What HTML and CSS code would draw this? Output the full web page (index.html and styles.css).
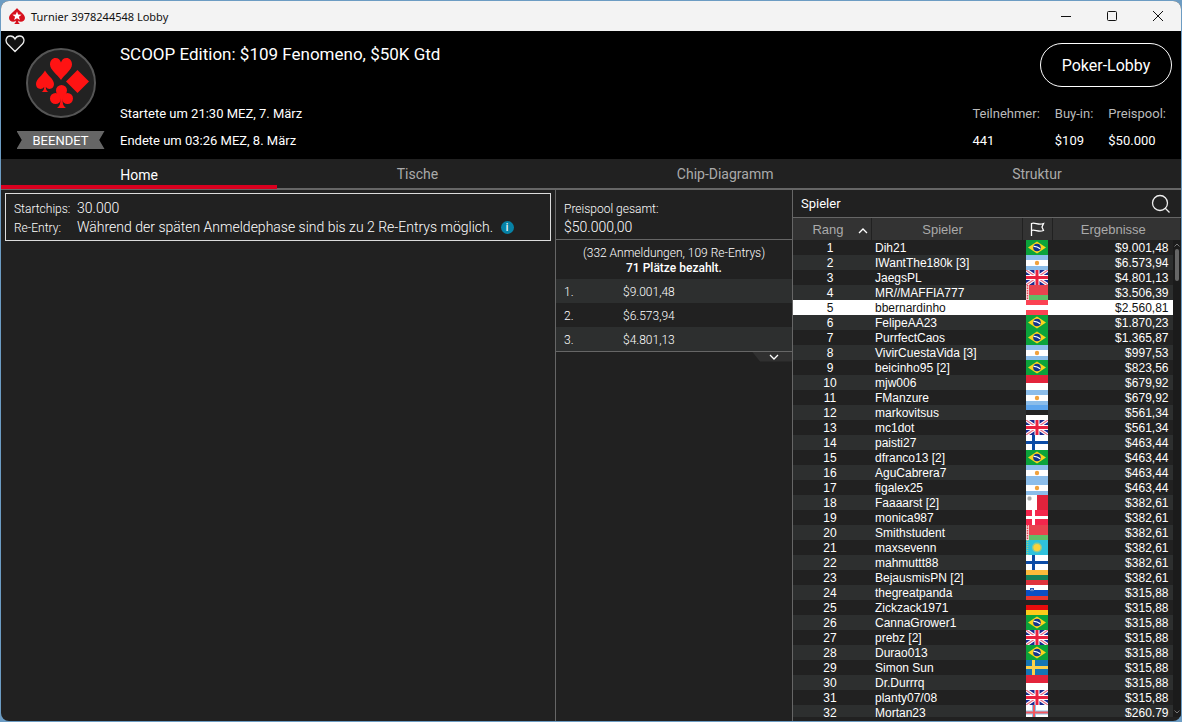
FILE: index.html
```html
<!DOCTYPE html>
<html lang="de">
<head>
    <meta charset="UTF-8">
    <meta name="viewport" content="width=device-width, initial-scale=1.0">
    <title>Turnier 3978244548 Lobby</title>
    <link rel="stylesheet" href="styles.css">
</head>
<body>
    <svg class="sprite" aria-hidden="true">
        <symbol id="flag-br" viewBox="0 0 22 15">
            <rect width="22" height="15" fill="#0ba33b"/>
            <path d="M11 1.5L20 7.5L11 13.5L2 7.5Z" fill="#fbd41d"/>
            <circle cx="11" cy="7.5" r="3.8" fill="#12348c"/>
            <path d="M7.6 6.4Q11 6.2 14.2 8.8" stroke="#fff" stroke-width="1.2" fill="none"/>
        </symbol>
        <symbol id="flag-ar" viewBox="0 0 22 15">
            <rect width="22" height="15" fill="#fff"/>
            <rect width="22" height="5" fill="#8bbdea"/>
            <rect y="11" width="22" height="4" fill="#8bbdea"/>
            <circle cx="11" cy="8" r="2.2" fill="#f0a23c"/>
        </symbol>
        <symbol id="flag-gb" viewBox="0 0 22 15">
            <rect width="22" height="15" fill="#1b2a91"/>
            <path d="M0 0L22 15M22 0L0 15" stroke="#fff" stroke-width="3.4"/>
            <path d="M0 0L22 15M22 0L0 15" stroke="#ec6f86" stroke-width="1.2"/>
            <path d="M11 0V15M0 7.5H22" stroke="#fff" stroke-width="5"/>
            <path d="M11 0V15M0 7.5H22" stroke="#e8213f" stroke-width="3"/>
        </symbol>
        <symbol id="flag-by" viewBox="0 0 22 15">
            <rect width="22" height="10" fill="#e8424f"/>
            <rect y="10" width="22" height="5" fill="#5fbe67"/>
            <rect width="3" height="15" fill="#f4d9da"/>
            <path d="M1.5 0V15" stroke="#e8424f" stroke-width="1.4" stroke-dasharray="1.5 1"/>
        </symbol>
        <symbol id="flag-at" viewBox="0 0 22 15">
            <rect width="22" height="15" fill="#fb4253"/>
            <rect y="5" width="22" height="5" fill="#fff"/>
        </symbol>
        <symbol id="flag-id" viewBox="0 0 22 15">
            <rect width="22" height="15" fill="#fff"/>
            <rect width="22" height="8" fill="#e3243b"/>
        </symbol>
        <symbol id="flag-ee" viewBox="0 0 22 15">
            <rect width="22" height="15" fill="#fff"/>
            <rect width="22" height="5" fill="#5ea6ee"/>
            <rect y="5" width="22" height="5" fill="#222"/>
        </symbol>
        <symbol id="flag-fi" viewBox="0 0 22 15">
            <rect width="22" height="15" fill="#fff"/>
            <path d="M7.5 0V15M0 7.5H22" stroke="#0b4ba6" stroke-width="3"/>
        </symbol>
        <symbol id="flag-mt" viewBox="0 0 22 15">
            <rect width="22" height="15" fill="#fff"/>
            <rect x="11" width="11" height="15" fill="#e0233c"/>
            <path d="M1.5 3.5H5.5M3.5 1.5V5.5" stroke="#aaa" stroke-width="2.6"/>
        </symbol>
        <symbol id="flag-dk" viewBox="0 0 22 15">
            <rect width="22" height="15" fill="#f4264c"/>
            <path d="M7.5 0V15M0 7.5H22" stroke="#fff" stroke-width="3"/>
        </symbol>
        <symbol id="flag-kz" viewBox="0 0 22 15">
            <rect width="22" height="15" fill="#2fc2dc"/>
            <circle cx="11" cy="7.5" r="5" fill="#8fc990"/>
            <circle cx="11" cy="7.5" r="3.6" fill="#fcd23c"/>
            <path d="M1.5 0V15" stroke="#a9c878" stroke-width="1.5" stroke-dasharray="1 1"/>
        </symbol>
        <symbol id="flag-lt" viewBox="0 0 22 15">
            <rect width="22" height="5" fill="#fdbb3b"/>
            <rect y="5" width="22" height="5" fill="#16815a"/>
            <rect y="10" width="22" height="5" fill="#df333c"/>
        </symbol>
        <symbol id="flag-si" viewBox="0 0 22 15">
            <rect width="22" height="5" fill="#fff"/>
            <rect y="5" width="22" height="6" fill="#0a4fc4"/>
            <rect y="11" width="22" height="4" fill="#e8362f"/>
            <path d="M4 3H8V5.5L6 7.5L4 5.5Z" fill="#2458b4"/>
            <path d="M5 5.5L6 4.5L7 5.5" stroke="#fff" fill="none"/>
        </symbol>
        <symbol id="flag-de" viewBox="0 0 22 15">
            <rect width="22" height="5" fill="#222"/>
            <rect y="5" width="22" height="5" fill="#e80c0c"/>
            <rect y="10" width="22" height="5" fill="#fdcb1a"/>
        </symbol>
        <symbol id="flag-se" viewBox="0 0 22 15">
            <rect width="22" height="15" fill="#1576b5"/>
            <path d="M7.5 0V15M0 7.5H22" stroke="#fcd14a" stroke-width="3"/>
        </symbol>
        <symbol id="flag-fo" viewBox="0 0 22 15">
            <rect width="22" height="15" fill="#fff"/>
            <path d="M8 0V15M0 7.5H22" stroke="#8cc4e6" stroke-width="4"/>
            <path d="M8 0V15M0 7.5H22" stroke="#f2565f" stroke-width="2"/>
        </symbol>
    </svg>

    <div class="window">
        <div class="titlebar">
            <svg class="app-icon" width="16" height="17" viewBox="0 0 16 17">
                <path d="M8 0C6.5 2.8 0 5.6 0 10C0 13.6 4.5 14.8 6.9 12.8C6.8 14.4 6.3 15.4 4.9 16H11.1C9.7 15.4 9.2 14.4 9.1 12.8C11.5 14.8 16 13.6 16 10C16 5.6 9.5 2.8 8 0Z" fill="#d7101c"/>
                <path d="M8 3.4L9.2 6.6L12.6 6.7L9.9 8.8L10.9 12.1L8 10.2L5.1 12.1L6.1 8.8L3.4 6.7L6.8 6.6Z" fill="#fff"/>
            </svg>
            <span class="window-title">Turnier 3978244548 Lobby</span>
            <button class="window-button" aria-label="Minimieren">
                <svg width="12" height="12" viewBox="0 0 12 12"><path d="M1 6.5H11"/></svg>
            </button>
            <button class="window-button" aria-label="Maximieren">
                <svg width="12" height="12" viewBox="0 0 12 12"><rect x="1.5" y="1.5" width="9" height="9" rx="1"/></svg>
            </button>
            <button class="window-button" aria-label="Schließen">
                <svg width="12" height="12" viewBox="0 0 12 12"><path d="M1 1L11 11M11 1L1 11"/></svg>
            </button>
        </div>

        <header class="header">
            <button class="favorite" aria-label="Favorit">
                <svg width="20" height="18" viewBox="0 0 20 18"><path d="M10 16.500L2.800 9.300C-0.700 5.500 1.600 1 5.300 1C7.600 1 9.200 2.200 10 4C10.800 2.200 12.400 1 14.700 1C18.400 1 20.700 5.500 17.200 9.300Z"/></svg>
            </button>
            <div class="badge-column">
                <svg class="badge" width="70" height="70" viewBox="0 0 70 70">
                    <circle cx="35" cy="35" r="34" fill="#222" stroke="#555" stroke-width="2"/>
                    <g fill="#ff1313">
                        <path d="M35 32C31.5 26.5 24 22 24 16.5C24 12.5 26.5 10 29.5 10C32.5 10 34.3 12 35 14.5C35.700 12 37.500 10 40.500 10C43.500 10 46 12.500 46 16.500C46 22 38.500 26.500 35 32Z"/>
                        <path d="M19 22.500C16.500 27.500 10 31 10 36C10 41 15.500 42.500 18.200 39C18 41.500 17.500 43 15.500 44H22.500C20.500 43 20 41.500 19.800 39C22.500 42.500 28 41 28 36C28 31 21.500 27.500 19 22.500Z"/>
                        <path d="M51.5 22L63 33.5L51.5 45L40 33.5Z"/>
                        <circle cx="35.5" cy="42.5" r="5.5"/>
                        <circle cx="29.5" cy="50.5" r="5.5"/>
                        <circle cx="41.5" cy="50.5" r="5.5"/>
                        <path d="M34.500 46H36.500L38 50H36.500C36.500 55 37 58 40 60H31C34 58 34.500 55 34.500 50H33Z"/>
                    </g>
                </svg>
                <div class="status">BEENDET</div>
            </div>
            <div class="tournament">
                <h1>SCOOP Edition: $109 Fenomeno, $50K Gtd</h1>
                <p>Startete um 21:30 MEZ, 7. März</p>
                <p>Endete um 03:26 MEZ, 8. März</p>
            </div>
            <div class="summary">
                <button class="lobby-button">Poker-Lobby</button>
                <dl class="stats">
                    <div><dt>Teilnehmer:</dt><dd>441</dd></div>
                    <div><dt>Buy-in:</dt><dd>$109</dd></div>
                    <div><dt>Preispool:</dt><dd>$50.000</dd></div>
                </dl>
            </div>
        </header>

        <nav class="tabs">
            <a class="tab active" href="#home">Home</a>
            <a class="tab" href="#tische">Tische</a>
            <a class="tab" href="#chips">Chip-Diagramm</a>
            <a class="tab" href="#struktur">Struktur</a>
        </nav>

        <main class="content">
            <section class="info-panel">
                <dl class="info-box">
                    <dt>Startchips:</dt>
                    <dd>30.000</dd>
                    <dt>Re-Entry:</dt>
                    <dd>Während der späten Anmeldephase sind bis zu 2 Re-Entrys möglich. <span class="info-icon">i</span></dd>
                </dl>
            </section>

            <section class="prize-panel">
                <div class="prize-total">
                    <div>Preispool gesamt:</div>
                    <div class="prize-amount">$50.000,00</div>
                </div>
                <div class="prize-entries">
                    <div>(332 Anmeldungen, 109 Re-Entrys)</div>
                    <strong>71 Plätze bezahlt.</strong>
                </div>
                <table class="prize-table">
                    <tr><td>1.</td><td>$9.001,48</td></tr>
                    <tr><td>2.</td><td>$6.573,94</td></tr>
                    <tr><td>3.</td><td>$4.801,13</td></tr>
                </table>
                <button class="prize-more" aria-label="Mehr anzeigen">
                    <svg width="10" height="6" viewBox="0 0 10 6"><path d="M1 1L5 5L9 1"/></svg>
                </button>
            </section>

            <section class="player-panel">
                <div class="player-search">
                    <span>Spieler</span>
                    <button class="search-button" aria-label="Suchen">
                        <svg width="20" height="20" viewBox="0 0 20 20"><circle cx="9" cy="9" r="7.5"/><path d="M14 14L18.5 18.5"/></svg>
                    </button>
                </div>
                <div class="player-list">
                    <table class="player-table">
                        <thead>
                            <tr>
                                <th class="col-rank">Rang <svg class="sort" width="10" height="6" viewBox="0 0 10 6"><path d="M1 5L5 1L9 5"/></svg></th>
                                <th class="col-name">Spieler</th>
                                <th class="col-flag"><svg width="15" height="14" viewBox="0 0 15 14"><path d="M1.5 14V1.5C5 0 8 3.5 13.5 1.5L12 5L13.5 8.5C8 10.5 5 7 1.5 8.5"/></svg></th>
                                <th class="col-result">Ergebnisse</th>
                            </tr>
                        </thead>
                        <tbody id="players"></tbody>
                    </table>
                    <div class="scrollbar">
                        <svg width="6" height="4" viewBox="0 0 6 4"><path d="M0.5 3.5L3 1L5.5 3.5"/></svg>
                        <div class="thumb"></div>
                        <svg class="down" width="6" height="4" viewBox="0 0 6 4"><path d="M0.5 0.5L3 3L5.5 0.5"/></svg>
                    </div>
                </div>
            </section>
        </main>
    </div>

    <script src="script.js"></script>
</body>
</html>
```
FILE: styles.css
```css
* {
    box-sizing: border-box;
}
body {
    margin: 0;
    height: 100vh;
    padding: 1px;
    background-color: #6c9cc3;
    color: #fff;
    font-family: Roboto, Arial, sans-serif;
    font-size: 13px;
}
h1, p, dl, dd {
    margin: 0;
}
button {
    padding: 0;
    border: none;
    background: none;
    color: inherit;
    font-family: inherit;
    cursor: pointer;
}
svg {
    display: block;
    fill: none;
}
.sprite {
    position: absolute;
    width: 0;
    height: 0;
}
.window {
    display: flex;
    flex-direction: column;
    height: 100%;
    border-radius: 8px;
    overflow: hidden;
    background-color: #212121;
}

/* title bar */
.titlebar {
    display: flex;
    align-items: center;
    flex: none;
    height: 30px;
    padding-left: 8px;
    background-color: #f3f3f3;
    color: #111;
}
.window-title {
    flex: 1;
    margin-left: 6px;
    font-family: "Noto Sans", "Segoe UI", sans-serif;
    font-size: 11px;
}
.window-button {
    display: flex;
    align-items: center;
    justify-content: center;
    width: 46px;
    height: 30px;
    stroke: #111;
}

/* tournament header */
.header {
    position: relative;
    display: flex;
    flex: none;
    height: 128px;
    background-color: #000;
}
.favorite {
    position: absolute;
    left: 4px;
    top: 4px;
}
.favorite path {
    fill: #111;
    stroke: #eee;
    stroke-width: 1.3;
}
.badge-column {
    display: flex;
    flex-direction: column;
    align-items: center;
    gap: 13px;
    width: 119px;
    padding-top: 17px;
}
.status {
    width: 88px;
    height: 18px;
    line-height: 19px;
    background-color: #666;
    clip-path: polygon(0 0, 100% 0, 94% 50%, 100% 100%, 0 100%, 6% 50%);
    text-align: center;
}
.tournament {
    flex: 1;
}
.tournament h1 {
    padding: 11px 0 34px;
    font-size: 17px;
    font-weight: 400;
    line-height: 24px;
}
.tournament p {
    line-height: 27px;
}
.summary {
    padding: 12px 9px 0 0;
}
.lobby-button {
    display: block;
    width: 132px;
    height: 44px;
    margin-left: auto;
    border: 1px solid #fff;
    border-radius: 22px;
    font-size: 16px;
}
.stats {
    display: flex;
    gap: 15px;
    margin: 13px 6px 0 0;
    line-height: 27px;
}
.stats dt {
    color: #bbb;
}

/* tabs */
.tabs {
    display: flex;
    flex: none;
    height: 31px;
    border-bottom: 2px solid #666;
    background-color: #212121;
}
.tab {
    flex: 1 1 auto;
    height: 30px;
    line-height: 31px;
    color: #aaa;
    font-size: 14px;
    text-align: center;
    text-decoration: none;
}
.tab.active {
    border-bottom: 4px solid #d9001f;
    color: #fff;
    line-height: 32px;
}

.content {
    display: flex;
    flex: 1;
    min-height: 0;
}

/* left panel */
.info-panel {
    flex: 1;
    padding: 3px 4px;
}
.info-box {
    display: grid;
    grid-template-columns: 55px 1fr;
    column-gap: 8px;
    align-items: baseline;
    height: 48px;
    padding: 5px 8px;
    border: 1px solid #ddd;
    font-weight: 300;
    line-height: 18px;
}
.info-box dt {
    font-size: 12px;
}
.info-box dd {
    font-size: 14px;
}
.info-icon {
    display: inline-block;
    width: 13px;
    height: 13px;
    margin-left: 4px;
    border-radius: 50%;
    background-color: #0782a6;
    font-size: 10px;
    font-weight: 500;
    line-height: 13px;
    text-align: center;
    vertical-align: 1px;
}

/* prize pool */
.prize-panel {
    width: 238px;
    border: 1px solid #666;
    border-width: 0 1px;
    font-weight: 300;
}
.prize-total {
    height: 50px;
    padding: 10px 8px 0;
    border-bottom: 1px solid #666;
    font-size: 12px;
    line-height: 18px;
}
.prize-amount {
    font-size: 14px;
}
.prize-entries {
    height: 39px;
    padding-top: 6px;
    font-size: 12px;
    line-height: 15px;
    text-align: center;
}
.prize-entries strong {
    font-weight: 500;
}
.prize-table {
    width: 100%;
    border-collapse: collapse;
    border-bottom: 1px solid #666;
    font-size: 12px;
}
.prize-table td {
    height: 24px;
    padding: 2px 8px 0;
}
.prize-table td:first-child {
    width: 59px;
}
.prize-table tr:nth-child(odd) {
    background-color: #2d2f2f;
}
.prize-more {
    display: flex;
    align-items: center;
    justify-content: center;
    width: 40px;
    height: 10px;
    margin-left: auto;
    padding-left: 4px;
    background-color: #303030;
    clip-path: polygon(0 0, 100% 0, 100% 100%, 20% 100%);
}
.prize-more path {
    stroke: #fff;
    stroke-width: 1.3;
}

/* player list */
.player-panel {
    display: flex;
    flex-direction: column;
    width: 388px;
    padding-bottom: 4px;
}
.player-search {
    display: flex;
    align-items: center;
    justify-content: space-between;
    flex: none;
    height: 28px;
    padding: 0 10px 0 8px;
    border-bottom: 1px solid #666;
}
.player-search svg {
    stroke: #eee;
    stroke-width: 1.3;
}
.player-list {
    position: relative;
    flex: 1;
    min-height: 0;
    overflow: hidden;
}
.player-table {
    width: 100%;
    table-layout: fixed;
    border-collapse: collapse;
    font-family: "Liberation Sans", Arial, sans-serif;
    font-size: 12px;
    line-height: 13px;
}
.player-table th {
    height: 22px;
    padding: 0;
    border-right: 1px solid #212121;
    background-color: #333;
    color: #aaa;
    font-size: 13px;
    font-weight: 400;
}
.player-table th svg {
    margin: 0 auto;
    stroke: #fff;
    stroke-width: 1.3;
}
.player-table th .sort {
    display: inline-block;
    margin-left: 11px;
}
.player-table .col-rank {
    width: 78px;
    padding-left: 17px;
}
.player-table .col-name {
    width: 151px;
    padding-right: 8px;
}
.player-table .col-flag {
    width: 30px;
}
.player-table .col-result {
    padding-right: 6px;
}
.player-table td {
    height: 15px;
    padding: 2px 4px 0;
}
.player-table td:first-child {
    padding-right: 8px;
    text-align: center;
}
.player-table td:nth-child(3) {
    padding-top: 0;
}
.player-table td:last-child {
    padding-right: 12px;
    text-align: right;
}
.player-table tbody tr:nth-child(even) {
    background-color: #2d2f2f;
}
.player-table tbody tr.selected {
    background-color: #fff;
    color: #111;
}
.flag {
    width: 22px;
    height: 15px;
}
.scrollbar {
    position: absolute;
    top: 22px;
    right: 0;
    bottom: 0;
    display: flex;
    flex-direction: column;
    align-items: center;
    gap: 2px;
    width: 8px;
    padding: 3px 0;
    background-color: #1b1b1b;
}
.scrollbar path {
    stroke: #777;
}
.scrollbar .down {
    margin-top: auto;
}
.thumb {
    width: 4px;
    height: 32px;
    border-radius: 2px;
    background-color: #666;
}
```
FILE: script.js
```js
const players = [
    ['Dih21', 'br', '$9.001,48'],
    ['IWantThe180k [3]', 'ar', '$6.573,94'],
    ['JaegsPL', 'gb', '$4.801,13'],
    ['MR//MAFFIA777', 'by', '$3.506,39'],
    ['bbernardinho', 'at', '$2.560,81'],
    ['FelipeAA23', 'br', '$1.870,23'],
    ['PurrfectCaos', 'br', '$1.365,87'],
    ['VivirCuestaVida [3]', 'ar', '$997,53'],
    ['beicinho95 [2]', 'br', '$823,56'],
    ['mjw006', 'id', '$679,92'],
    ['FManzure', 'ar', '$679,92'],
    ['markovitsus', 'ee', '$561,34'],
    ['mc1dot', 'gb', '$561,34'],
    ['paisti27', 'fi', '$463,44'],
    ['dfranco13 [2]', 'br', '$463,44'],
    ['AguCabrera7', 'ar', '$463,44'],
    ['figalex25', 'ar', '$463,44'],
    ['Faaaarst [2]', 'mt', '$382,61'],
    ['monica987', 'dk', '$382,61'],
    ['Smithstudent', 'by', '$382,61'],
    ['maxsevenn', 'kz', '$382,61'],
    ['mahmuttt88', 'fi', '$382,61'],
    ['BejausmisPN [2]', 'lt', '$382,61'],
    ['thegreatpanda', 'si', '$315,88'],
    ['Zickzack1971', 'de', '$315,88'],
    ['CannaGrower1', 'br', '$315,88'],
    ['prebz [2]', 'gb', '$315,88'],
    ['Durao013', 'br', '$315,88'],
    ['Simon Sun', 'se', '$315,88'],
    ['Dr.Durrrq', 'id', '$315,88'],
    ['planty07/08', 'gb', '$315,88'],
    ['Mortan23', 'fo', '$260,79']
];
const selectedRank = 5;

const tbody = document.getElementById('players');

players.forEach(([name, flag, result], i) => {
    const row = document.createElement('tr');
    if (i + 1 === selectedRank) {
        row.classList.add('selected');
    }
    row.innerHTML = `
        <td>${i + 1}</td>
        <td>${name}</td>
        <td><svg class="flag"><use href="#flag-${flag}"/></svg></td>
        <td>${result}</td>`;
    tbody.appendChild(row);
});
```
